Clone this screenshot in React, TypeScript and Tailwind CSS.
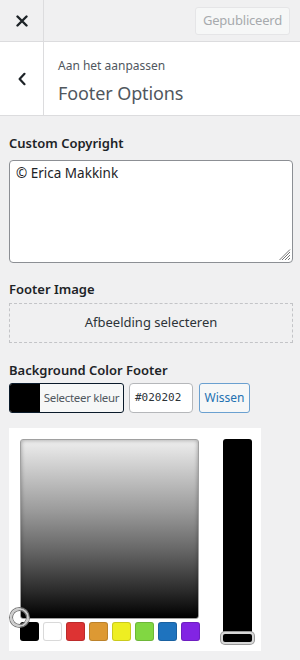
import React from "react";

const swatches = ["#000000", "#ffffff", "#dd3333", "#dd9933", "#eeee22", "#81d742", "#1e73be", "#8224e3"];

export default function App() {
  return (
    <div
      className="w-[300px] h-[660px] overflow-hidden bg-[#f0f0f1] text-[#1d2327]"
      style={{ fontFamily: '"Noto Sans", "Open Sans", sans-serif' }}
    >
      {/* top bar */}
      <div className="flex h-[42px] items-center border-b border-[#dcdcde]">
        <div className="flex h-full w-[44px] items-center justify-center border-r border-[#dcdcde]">
          <svg width="12" height="12" viewBox="0 0 12 12">
            <path d="M1.5 1.5 L10.5 10.5 M10.5 1.5 L1.5 10.5" stroke="#1d2327" strokeWidth="2.4" strokeLinecap="round" />
          </svg>
        </div>
        <div className="flex-1" />
        <div className="mr-[10px] flex h-[28px] w-[95px] items-center justify-center rounded-[3px] border border-[#e5e5e7] bg-[#f6f7f7] text-[13px] tracking-[-0.2px] text-[#a7aaad]">
          Gepubliceerd
        </div>
      </div>

      {/* section header */}
      <div className="flex h-[74px] border-b border-[#dcdcde] bg-white">
        <div className="flex w-[44px] items-center justify-center border-r border-[#dcdcde]">
          <svg width="10" height="14" viewBox="0 0 10 14">
            <path d="M7.5 1.8 L2.6 7 L7.5 12.2" stroke="#1d2327" strokeWidth="2.2" fill="none" strokeLinecap="round" strokeLinejoin="round" />
          </svg>
        </div>
        <div className="flex flex-col justify-center pl-[14px] pt-[6px]">
          <div className="text-[12px] leading-[16px] text-[#50575e]">Aan het aanpassen</div>
          <div className="mt-[7px] text-[18px] leading-[24px] tracking-[-0.1px] text-[#50575e]">Footer Options</div>
        </div>
      </div>

      {/* body */}
      <div className="px-[9px] pt-[18px]">
        <div className="text-[13px] font-semibold leading-[18px] text-[#1d2327]">Custom Copyright</div>
        <div className="relative mt-[8px] h-[103px] w-[284px] rounded-[4px] border border-[#8c8f94] bg-white px-[6px] pt-[2px] text-[13.5px] leading-[20px] text-[#1d2327]">
          © Erica Makkink
          <svg className="absolute bottom-[1px] right-[1px]" width="12" height="12" viewBox="0 0 12 12">
            <path d="M11 3 L3 11 M11 6 L6 11 M11 9 L9 11 M11 0.5 L0.5 11" stroke="#666" strokeWidth="0.9" />
          </svg>
        </div>

        <div className="mt-[17px] text-[13px] font-semibold leading-[18px] text-[#1d2327]">Footer Image</div>
        <div className="mt-[5px] flex h-[40px] w-[284px] items-center justify-center border border-dashed border-[#c3c4c7] text-[13px] text-[#2c3338]">
          Afbeelding selecteren
        </div>

        <div className="mt-[18px] text-[13px] font-semibold leading-[18px] text-[#1d2327]">Background Color Footer</div>
        <div className="mt-[4px] flex items-center">
          <div className="flex h-[30px] w-[115px] overflow-hidden rounded-[3px] border border-[#0a1a2a] bg-[#f6f7f7]">
            <div className="w-[30px] shrink-0 bg-black" />
            <div className="flex flex-1 items-center justify-center whitespace-nowrap text-[11.5px] tracking-[-0.3px] text-[#50575e]">
              Selecteer kleur
            </div>
          </div>
          <div
            className="ml-[5px] flex h-[30px] w-[64px] items-center rounded-[4px] border border-[#b5b7ba] bg-white pl-[5px] text-[11px] text-[#2c3338]"
            style={{ fontFamily: '"DejaVu Sans Mono", monospace' }}
          >
            #020202
          </div>
          <div className="ml-[6px] flex h-[30px] w-[51px] items-center justify-center rounded-[3px] border border-[#6aa0d0] bg-[#f6f7f7] text-[12px] text-[#2271b1]">
            Wissen
          </div>
        </div>

        {/* picker */}
        <div className="mt-[15px] flex h-[223px] w-[252px] bg-white pl-[11px] pt-[11px]">
          <div className="relative flex flex-col">
            <div
              className="h-[180px] w-[179px] rounded-[3px] border border-[#a0a0a0]"
              style={{
                background: "linear-gradient(to bottom, #eeeeee 0%, #c8c8c8 18%, #9a9a9a 40%, #666666 62%, #2a2a2a 85%, #000000 100%)",
                boxShadow: "inset 0 0 4px rgba(0,0,0,0.35)",
              }}
            />
            <div className="mt-[3px] flex gap-[4px]">
              {swatches.map((c) => (
                <div
                  key={c}
                  className="h-[19px] w-[19px] rounded-[3px]"
                  style={{ background: c, boxShadow: "inset 0 0 0 1px rgba(0,0,0,0.15)" }}
                />
              ))}
            </div>
            <div className="absolute left-[-10px] top-[169px] h-[19px] w-[19px] rounded-full border-[2px] border-[#ccc] bg-transparent shadow-[0_0_0_1px_#777,inset_0_0_0_1px_#777]" />
          </div>
          <div className="relative ml-[23px]">
            <div className="h-[198px] w-[29px] rounded-[3px] bg-black" />
            <div className="absolute left-[-2px] top-[193px] h-[12px] w-[33px] rounded-[4px] border-[2px] border-[#d8d8d8] bg-black shadow-[0_0_0_1px_#999]" />
          </div>
        </div>
      </div>
    </div>
  );
}
